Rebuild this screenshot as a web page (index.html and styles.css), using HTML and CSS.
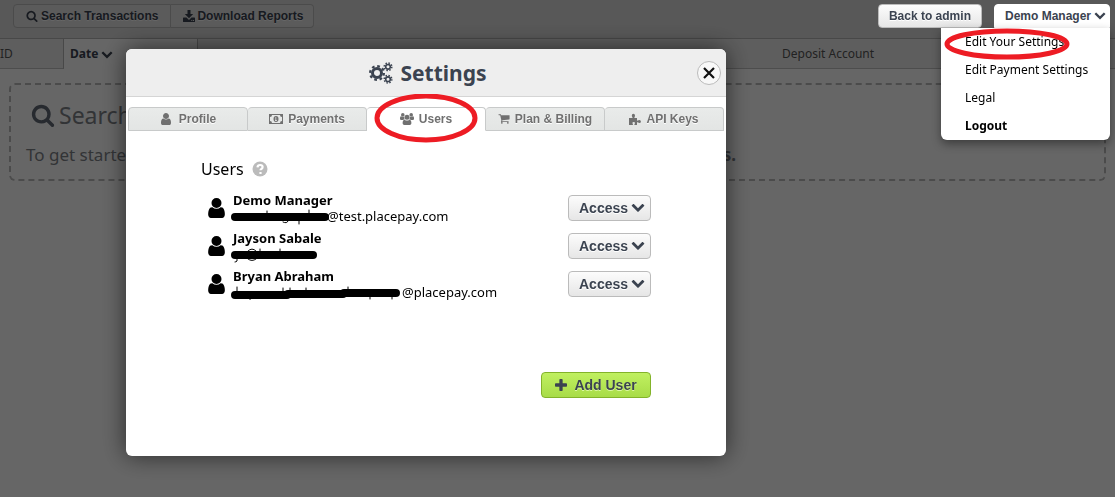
FILE: index.html
```
<!DOCTYPE html>
<html lang="en">
<head>
  <meta charset="UTF-8" />
  <meta name="viewport" content="width=device-width, initial-scale=1" />
  <title>Settings - Users</title>
  <link rel="stylesheet" href="styles.css">
</head>
<body>
  <!-- Icon set -->
  <svg class="sprite" aria-hidden="true">
    <symbol id="i-search" viewBox="0 0 1792 1792"><path d="M1216 832q0-185-131.500-316.500t-316.500-131.500-316.500 131.500-131.500 316.500 131.500 316.500 316.500 131.500 316.500-131.500 131.500-316.500zm512 832q0 52-38 90t-90 38q-54 0-90-38l-343-342q-179 124-399 124-143 0-273.500-55.500t-225-150-150-225-55.500-273.500 55.500-273.500 150-225 225-150 273.500-55.500 273.500 55.500 225 150 150 225 55.500 273.500q0 220-124 399l343 343q37 37 37 90z"/></symbol>
    <symbol id="i-user" viewBox="256 128 1280 1536"><path d="M1536 1399q0 109-62.500 187t-150.500 78h-854q-88 0-150.500-78t-62.500-187q0-85 8.500-160.500t31.500-152 58.500-131 94-89 134.500-34.500q131 128 313 128t313-128q76 0 134.500 34.500t94 89 58.500 131 31.500 152 8.500 160.500zm-256-887q0 159-112.500 271.500t-271.500 112.500-271.500-112.500-112.500-271.500 112.500-271.500 271.500-112.500 271.500 112.500 112.500 271.500z"/></symbol>
    <symbol id="i-chevron" viewBox="0 160 1792 1792"><path d="M1683 808l-742 741q-19 19-45 19t-45-19l-742-741q-19-19-19-45.500t19-45.500l166-165q19-19 45-19t45 19l531 531 531-531q19-19 45-19t45 19l166 165q19 19 19 45.500t-19 45.500z"/></symbol>
    <symbol id="i-plus" viewBox="192 128 1408 1408"><path d="M1600 736v192q0 40-28 68t-68 28h-416v416q0 40-28 68t-68 28h-192q-40 0-68-28t-28-68v-416h-416q-40 0-68-28t-28-68v-192q0-40 28-68t68-28h416v-416q0-40 28-68t68-28h192q40 0 68 28t28 68v416h416q40 0 68 28t28 68z"/></symbol>
    <symbol id="i-cart" viewBox="0 64 1792 1792"><path d="M704 1536q0 52-38 90t-90 38-90-38-38-90 38-90 90-38 90 38 38 90zm896 0q0 52-38 90t-90 38-90-38-38-90 38-90 90-38 90 38 38 90zm128-1088v512q0 24-16.500 42.500t-40.500 21.500l-1044 122q13 60 13 70 0 16-24 64h920q26 0 45 19t19 45-19 45-45 19h-1024q-26 0-45-19t-19-45q0-11 8-31.500t16-36 21.500-40 15.500-29.500l-177-823h-204q-26 0-45-19t-19-45 19-45 45-19h256q16 0 28.500 6.500t19.500 15.500 13 24.500 8 26 5.500 29.500 4.500 26h1201q26 0 45 19t19 45z"/></symbol>
    <symbol id="i-download" viewBox="0 0 12 12"><path d="M4.500 0h3v4h2.700L6 8.200 1.800 4h2.700zM.6 7.500h2.900L6 10l2.500-2.500h2.900q.6 0 .6.600v3.300q0 .6-.6.600H.6q-.6 0-.6-.6V8.100q0-.6.600-.6zM8.300 10v1h1v-1zm1.700 0v1h1v-1z" fill-rule="evenodd"/></symbol>
    <symbol id="i-money" viewBox="0 0 14 10"><path d="M0 0h14v10H0zM3 1a2 2 0 0 1-2 2v4a2 2 0 0 1 2 2h8a2 2 0 0 1 2-2V3a2 2 0 0 1-2-2z" fill-rule="evenodd"/><ellipse cx="7" cy="5" rx="2.500" ry="3"/><path d="M6.200 3.500l1-.5v3.300h.8V7H6v-.7h.5V4z" fill="#e8e9e9"/></symbol>
    <symbol id="i-group" viewBox="0 0 14 12"><circle cx="2.800" cy="1.900" r="1.800"/><circle cx="11.200" cy="1.900" r="1.800"/><circle cx="7" cy="4.200" r="2.500"/><path d="M0 6V5q0-1.700 1-1.700 1.700 1 3 .5 0 1.500.8 2.500-1 .1-1.700.8H1.200Q0 7 0 6zM14 6V5q0-1.700-1-1.700-1.700 1-3 .5 0 1.500-.8 2.500 1 .1 1.700.8h1.900Q14 7 14 6zM2.600 10.300q0-3.600 2-3.600 2.400 1.700 4.800 0 2 0 2 3.600 0 1.700-1.700 1.700H4.300q-1.700 0-1.700-1.700z"/></symbol>
    <symbol id="i-puzzle" viewBox="0 0 12 12"><path d="M0 5h3.200q.6 0 .3-.7Q2.800 3.600 2.800 2.500 2.800.8 4.400.8T6 2.500q0 1-.6 1.700-.3.800.4.800H8v2.300q.2.700.9.200.6-.6 1.500-.6 1.500 0 1.500 1.500t-1.500 1.500q-.9 0-1.500-.6-.7-.3-.9.300V12H5.700q-.7-.2-.2-.9.500-.5.500-1Q6 9 4.700 9t-1.300 1.100q0 .5.500 1 .4.700-.3.900H0z"/></symbol>
    <symbol id="i-cogs" viewBox="0 0 24 22"><g fill="none" stroke="currentColor"><circle cx="8" cy="11" r="4.500" stroke-width="3"/><circle cx="8" cy="11" r="6.900" stroke-width="2.200" stroke-dasharray="2.710 2.710"/><circle cx="19" cy="4.800" r="2.300" stroke-width="1.600"/><circle cx="19" cy="4.800" r="3.800" stroke-width="1.500" stroke-dasharray="1.490 1.490"/><circle cx="19" cy="17.200" r="2.300" stroke-width="1.600"/><circle cx="19" cy="17.200" r="3.800" stroke-width="1.500" stroke-dasharray="1.490 1.490"/></g></symbol>
    <symbol id="i-help" viewBox="0 0 16 16"><circle cx="8" cy="8" r="7.500"/><path d="M5.500 6.300Q5.700 4 8.100 4q2.500 0 2.500 2.100 0 1.200-1.200 1.800-.9.500-.9 1.400M8.500 11v2" fill="none" stroke="#fff" stroke-width="2.200"/></symbol>
    <symbol id="i-close" viewBox="0 0 12 12"><path d="M1 1l10 10M11 1L1 11" fill="none" stroke="currentColor" stroke-width="2.200"/></symbol>
  </svg>

  <header class="topbar">
    <div class="btn-group">
      <button class="btn" type="button"><svg class="icon"><use href="#i-search"/></svg>Search Transactions</button>
      <button class="btn btn-tight" type="button"><svg class="icon"><use href="#i-download"/></svg>Download Reports</button>
    </div>
    <div class="account">
      <button class="btn" type="button">Back to admin</button>
      <div class="dropdown">
        <button class="btn dropdown-toggle" type="button" aria-expanded="true">Demo Manager<svg class="icon"><use href="#i-chevron"/></svg></button>
        <nav class="dropdown-menu">
          <a class="marked" href="#">Edit Your Settings
            <svg class="mark mark-menu" viewBox="0 0 126 32" aria-hidden="true"><ellipse cx="63" cy="16" rx="60" ry="13"/></svg>
          </a>
          <a href="#">Edit Payment Settings</a>
          <a href="#">Legal</a>
          <a class="logout" href="#">Logout</a>
        </nav>
      </div>
    </div>
  </header>

  <main>
    <div class="columns">
      <div class="col col-id">ID</div>
      <div class="col col-date">Date <svg class="icon"><use href="#i-chevron"/></svg></div>
      <div class="col col-rest"></div>
      <div class="col col-deposit">Deposit Account</div>
    </div>
    <section class="empty">
      <h2><svg class="icon"><use href="#i-search"/></svg>Search</h2>
      <p><span>To get started</span> <strong>transactions.</strong></p>
    </section>
  </main>

  <div class="overlay">
    <div class="modal" role="dialog" aria-labelledby="modalTitle">
      <div class="modal-header">
        <h1 id="modalTitle"><svg class="icon"><use href="#i-cogs"/></svg>Settings</h1>
        <button class="close" type="button" aria-label="Close"><svg class="icon"><use href="#i-close"/></svg></button>
      </div>

      <nav class="tabs">
        <button class="tab" type="button"><svg class="icon icon-user"><use href="#i-user"/></svg>Profile</button>
        <button class="tab" type="button"><svg class="icon icon-wide"><use href="#i-money"/></svg>Payments</button>
        <button class="tab active" type="button"><svg class="icon icon-wide"><use href="#i-group"/></svg>Users
          <svg class="mark mark-tab" viewBox="0 0 104 49" aria-hidden="true"><ellipse cx="52" cy="24" rx="49" ry="22"/></svg>
        </button>
        <button class="tab" type="button"><svg class="icon"><use href="#i-cart"/></svg>Plan &amp; Billing</button>
        <button class="tab" type="button"><svg class="icon"><use href="#i-puzzle"/></svg>API Keys</button>
      </nav>

      <div class="modal-body">
        <h3>Users <svg class="icon"><use href="#i-help"/></svg></h3>

        <ul class="users">
          <li>
            <svg class="avatar"><use href="#i-user"/></svg>
            <div class="user">
              <strong>Demo Manager</strong>
              <span class="email"><svg class="redacted" width="94" height="16" aria-hidden="true"><path d="M2 9h90"/><path class="trace" d="M34 3v3M76 2v3M50 14q4 2 5-1M66 13v3"/></svg>@test.placepay.com</span>
            </div>
            <button class="btn btn-access" type="button">Access<svg class="icon"><use href="#i-chevron"/></svg></button>
          </li>
          <li>
            <svg class="avatar"><use href="#i-user"/></svg>
            <div class="user">
              <strong>Jayson Sabale</strong>
              <span class="email"><svg class="redacted" width="87" height="16" aria-hidden="true"><path d="M2 9h78"/><path class="trace" d="M4 12v3q-1 1-2 1M15 5q4-4 8 0M15 13q4 3 8 0M27 3v3M47 3v3"/></svg></span>
            </div>
            <button class="btn btn-access" type="button">Access<svg class="icon"><use href="#i-chevron"/></svg></button>
          </li>
          <li>
            <svg class="avatar"><use href="#i-user"/></svg>
            <div class="user">
              <strong>Bryan Abraham</strong>
              <span class="email"><svg class="redacted" width="169" height="16" aria-hidden="true"><path d="M2 11h52M55 10h55M111 9h52"/><path class="trace" d="M4 3v6M15 14q3 3 4-1M50 4v4M57 4v4M73 4v4M115 3v4M137 12v3M159 12v3"/></svg>@placepay.com</span>
            </div>
            <button class="btn btn-access" type="button">Access<svg class="icon"><use href="#i-chevron"/></svg></button>
          </li>
        </ul>

        <div class="actions">
          <button class="btn btn-add" type="button"><svg class="icon"><use href="#i-plus"/></svg>Add User</button>
        </div>
      </div>
    </div>
  </div>
</body>
</html>
```

FILE: styles.css
```
* {
  box-sizing: border-box;
}

body {
  margin: 0;
  min-height: 100vh;
  font-family: "Noto Sans", "Open Sans", sans-serif;
  font-size: 12px;
  color: #3b4350;
  background: #fff;
}

h1, h2, h3, p, ul {
  margin: 0;
  padding: 0;
}

.sprite {
  position: absolute;
  width: 0;
  height: 0;
}

.icon {
  width: 12px;
  height: 12px;
  fill: currentColor;
  flex: none;
}

/* Buttons */
.btn {
  display: flex;
  align-items: center;
  justify-content: center;
  gap: 3px;
  height: 24px;
  padding: 0 10px;
  border: 1px solid #bbb;
  border-radius: 4px;
  background: linear-gradient(#fcfcfc, #e6e6e6);
  color: #3b4350;
  font: bold 12px "Liberation Sans", Arial, sans-serif;
  text-shadow: 0 1px 0 #fff;
  white-space: nowrap;
  cursor: pointer;
}

/* Top bar */
.topbar {
  display: flex;
  justify-content: space-between;
  height: 39px;
  padding: 4px 5px 0 13px;
  background: #dcdcdc;
  border-bottom: 1px solid #b4b4b4;
}

.btn-group {
  display: flex;
}

.btn-group .btn {
  padding: 0 12px;
  background: #e4e4e4;
}

.btn-group .btn:first-child {
  border-radius: 4px 0 0 4px;
}

.btn-group .btn:last-child {
  border-left: 0;
  border-radius: 0 4px 4px 0;
}

.btn-group .btn-tight {
  gap: 2px;
  padding: 0 10px 0 12px;
}

.account {
  position: relative;
  z-index: 20;
  display: flex;
  gap: 12px;
}

.dropdown {
  position: relative;
}

.dropdown-toggle {
  padding: 0 3px 0 10px;
  border-color: #fff;
  border-radius: 4px 4px 0 0;
  background: #fff;
}

.dropdown-menu {
  position: absolute;
  top: 24px;
  right: 0;
  width: 169px;
  border-radius: 0 0 6px 6px;
  background: #fff;
  box-shadow: 0 4px 10px rgba(0, 0, 0, 0.4);
}

.dropdown-menu a {
  display: block;
  padding-left: 24px;
  color: #000;
  line-height: 28px;
  text-decoration: none;
  white-space: nowrap;
}

.dropdown-menu .logout {
  font-weight: bold;
}

/* Transactions page */
.columns {
  display: flex;
  height: 30px;
  line-height: 30px;
}

.col {
  background: #ebebeb;
  border-bottom: 1px solid #c0c0c0;
  color: #555;
}

.col-id {
  width: 64px;
  border-right: 1px solid #b4b4b4;
}

.col-date {
  width: 134px;
  padding-left: 6px;
  border-right: 1px solid #b4b4b4;
  border-bottom: 0;
  background: #fff;
  color: #3b4350;
  font-weight: bold;
}

.col-date .icon {
  vertical-align: middle;
}

.col-rest {
  flex: 1;
}

.col-deposit {
  width: 333px;
}

.empty {
  margin: 14px 9px 0;
  padding: 14px 15px 8px;
  border: 2px dashed #bbb;
  border-radius: 6px;
  color: #7e8288;
  font-size: 17px;
  line-height: 32px;
  white-space: nowrap;
}

.empty h2 {
  display: flex;
  align-items: center;
  gap: 4px;
  padding-left: 5px;
  font-size: 23px;
  font-weight: normal;
  line-height: 32px;
}

.empty h2 .icon {
  width: 24px;
  height: 24px;
  color: #626a76;
}

.empty p {
  display: flex;
  justify-content: space-between;
  max-width: 710px;
  margin-top: 8px;
}

/* Modal */
.overlay {
  position: fixed;
  inset: 0;
  z-index: 10;
  padding: 49px 126px;
  background: rgba(0, 0, 0, 0.6);
}

.modal {
  max-width: 600px;
  padding-bottom: 58px;
  border-radius: 6px;
  background: #fff;
  box-shadow: 0 0 24px rgba(0, 0, 0, 0.6);
}

.modal-header {
  display: flex;
  align-items: center;
  height: 48px;
  padding: 0 5px 0 33px;
  border-bottom: 1px solid #d5d5d5;
  border-radius: 6px 6px 0 0;
  background: #eee;
}

.modal-header h1 {
  display: flex;
  flex: 1;
  align-items: center;
  justify-content: center;
  gap: 7px;
  font-size: 21px;
  line-height: 32px;
}

.modal-header h1 .icon {
  width: 24px;
  height: 22px;
}

.close {
  display: flex;
  align-items: center;
  justify-content: center;
  width: 24px;
  height: 24px;
  padding: 0;
  border: 1px solid #bbb;
  border-radius: 50%;
  background: #f8f8f8;
  color: #111;
  cursor: pointer;
}

.tabs {
  display: flex;
  padding: 10px 2px 0;
}

.tab {
  position: relative;
  display: flex;
  flex: 1;
  align-items: center;
  justify-content: center;
  gap: 5px;
  height: 24px;
  padding: 0;
  border: 1px solid #c8caca;
  border-left-width: 0;
  border-radius: 4px 4px 0 0;
  background: linear-gradient(#e9ebea, #e3e5e4);
  color: #707070;
  font: bold 12px "Liberation Sans", Arial, sans-serif;
  text-shadow: 0 1px 0 #fff;
  white-space: nowrap;
  cursor: pointer;
}

.tab:first-child {
  border-left-width: 1px;
}

.tab.active {
  border-bottom-color: #fff;
  background: #fff;
}

.icon-wide {
  width: 14px;
}

.icon-user {
  margin-right: 2px;
}

.modal-body {
  padding: 26px 75px 0;
}

.modal-body h3 {
  display: flex;
  align-items: center;
  gap: 8px;
  color: #000;
  font-size: 16px;
  font-weight: normal;
  line-height: 24px;
}

.modal-body h3 .icon {
  width: 16px;
  height: 16px;
  color: #bbb;
}

/* User list */
.users {
  display: flex;
  flex-direction: column;
  gap: 6px;
  margin-top: 11px;
  color: #000;
  font-size: 13px;
  line-height: 16px;
  list-style: none;
}

.users li {
  display: flex;
  align-items: center;
  gap: 8px;
  padding-left: 7px;
}

.avatar {
  width: 17px;
  height: 20px;
}

.user {
  flex: 1;
}

.user strong,
.email {
  display: flex;
  height: 16px;
}

.redacted {
  overflow: visible;
  fill: none;
  stroke: #000;
  stroke-width: 8px;
  stroke-linecap: round;
}

.redacted .trace {
  stroke-width: 1px;
}

.btn-access,
.btn-add {
  height: 26px;
  font-size: 14px;
}

.btn-access {
  width: 83px;
  padding: 0 5px 0 10px;
}

.btn-access .icon {
  width: 14px;
  height: 14px;
}

.actions {
  display: flex;
  justify-content: flex-end;
  margin-top: 72px;
}

.btn-add {
  gap: 7px;
  width: 110px;
  border-color: #83b32a;
  background: linear-gradient(#c0f060, #a8dc48);
  text-shadow: 0 1px 0 #dcf8a4;
}

/* Red circles over the highlighted items */
.marked {
  position: relative;
}

.mark {
  position: absolute;
  z-index: 5;
  fill: none;
  stroke: #ed1c24;
  stroke-width: 5px;
  pointer-events: none;
}

.mark-menu {
  top: 0;
  left: 3px;
  width: 126px;
  height: 32px;
}

.mark-tab {
  top: -14px;
  left: 7px;
  width: 104px;
  height: 49px;
}
```
